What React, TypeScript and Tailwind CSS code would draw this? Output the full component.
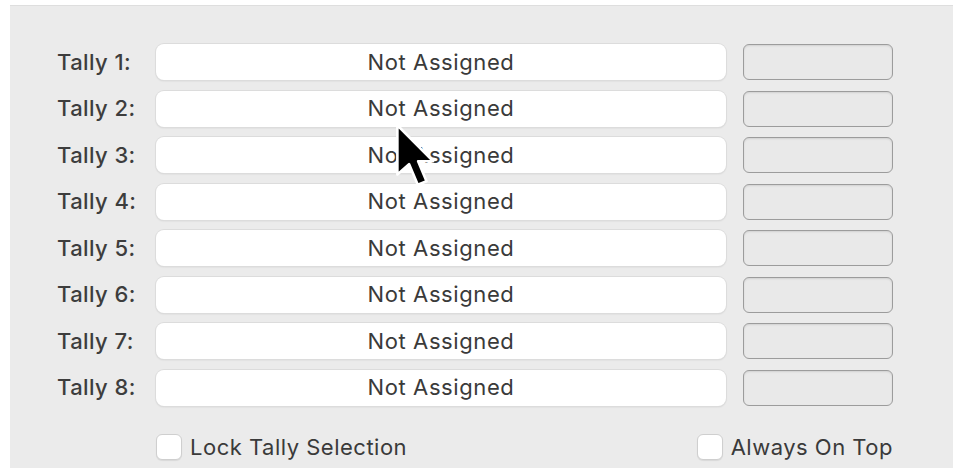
import { FC } from "react";

const tallies = [1, 2, 3, 4, 5, 6, 7, 8];

const Checkbox: FC<{ label: string }> = ({ label }) => (
  <label className="flex items-center gap-[8px]">
    <span className="w-[26px] h-[26px] rounded-[6px] bg-white border border-[#cfcfcf] shadow-[0_1px_1px_rgba(0,0,0,0.08)]" />
    <span className="text-[22px] tracking-[0.5px] text-[#3a3a3a]">{label}</span>
  </label>
);

const Cursor: FC = () => (
  <svg
    className="absolute left-[394px] top-[122px]"
    width="44"
    height="68"
    viewBox="-1 -1 13.5 21"
  >
    <path
      d="M0 0 L0 15.2 L3.6 12 L6.3 18.4 L9 17.3 L6.4 11.1 L11 11.1 Z"
      fill="#000"
      stroke="#fff"
      strokeWidth="0.8"
      strokeLinejoin="round"
    />
  </svg>
);

export default function App() {
  return (
    <div
      className="relative w-[958px] h-[476px] bg-white"
      style={{ fontFamily: "Inter, 'Noto Sans', 'Liberation Sans', sans-serif" }}
    >
      <div className="ml-[10px] pt-[5px]">
        <div className="w-[943px] h-[463px] bg-[#ebebeb] border-t border-[#dedede] pt-[38px] pl-[47px]">
          <div className="flex flex-col gap-[10.5px]">
            {tallies.map((n) => (
              <div key={n} className="flex items-center">
                <div className="w-[99px] text-[22px] tracking-[0.4px] font-medium text-[#3d3d3d]">
                  Tally {n}:
                </div>
                <div className="w-[570px] h-[36px] rounded-[8px] bg-white shadow-[0_0_0_1px_#dcdcdc,0_1px_2px_rgba(0,0,0,0.12)] flex items-center justify-center text-[22px] text-[#3a3a3a] tracking-[0.6px]">
                  Not Assigned
                </div>
                <div className="ml-[17px] w-[150px] h-[36px] rounded-[6px] border-[1.5px] border-[#9c9c9c] bg-[#e9e9e9] shadow-[inset_0_1px_2px_rgba(0,0,0,0.1)]" />
              </div>
            ))}
          </div>
          <div className="mt-[25px] ml-[99px] w-[737px] flex items-center justify-between">
            <Checkbox label="Lock Tally Selection" />
            <Checkbox label="Always On Top" />
          </div>
        </div>
      </div>
      <Cursor />
    </div>
  );
}
